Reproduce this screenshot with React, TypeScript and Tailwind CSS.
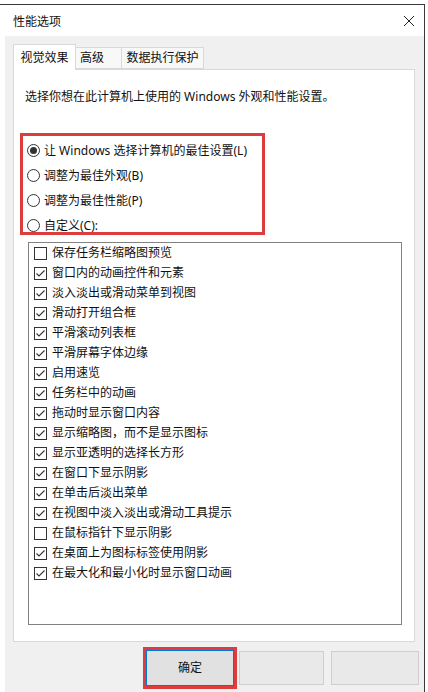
const font = { fontFamily: '"Noto Sans", "Noto Sans CJK SC", sans-serif' };

const options = [
  { label: '保存任务栏缩略图预览', checked: false },
  { label: '窗口内的动画控件和元素', checked: true },
  { label: '淡入淡出或滑动菜单到视图', checked: true },
  { label: '滑动打开组合框', checked: true },
  { label: '平滑滚动列表框', checked: true },
  { label: '平滑屏幕字体边缘', checked: true },
  { label: '启用速览', checked: true },
  { label: '任务栏中的动画', checked: true },
  { label: '拖动时显示窗口内容', checked: true },
  { label: '显示缩略图，而不是显示图标', checked: true },
  { label: '显示亚透明的选择长方形', checked: true },
  { label: '在窗口下显示阴影', checked: true },
  { label: '在单击后淡出菜单', checked: true },
  { label: '在视图中淡入淡出或滑动工具提示', checked: true },
  { label: '在鼠标指针下显示阴影', checked: false },
  { label: '在桌面上为图标标签使用阴影', checked: true },
  { label: '在最大化和最小化时显示窗口动画', checked: true },
];

const radios = [
  { label: '让 Windows 选择计算机的最佳设置(L)', selected: true },
  { label: '调整为最佳外观(B)', selected: false },
  { label: '调整为最佳性能(P)', selected: false },
  { label: '自定义(C):', selected: false },
];

function Radio({ selected }: { selected: boolean }) {
  return (
    <span className="w-[13px] h-[13px] rounded-full border border-[#333] bg-white flex items-center justify-center shrink-0">
      {selected && <span className="w-[7px] h-[7px] rounded-full bg-[#333]" />}
    </span>
  );
}

function Checkbox({ checked }: { checked: boolean }) {
  return (
    <span className="w-[13px] h-[13px] border border-[#333] bg-white flex items-center justify-center shrink-0">
      {checked && (
        <svg width="11" height="11" viewBox="0 0 11 11">
          <polyline points="1.5,5.5 4,8 9.5,2.5" fill="none" stroke="#333" strokeWidth="1.1" />
        </svg>
      )}
    </span>
  );
}

export default function App() {
  return (
    <div className="w-[428px] h-[692px] bg-white pt-[4px] overflow-hidden text-[12px] text-[#111]" style={font}>
      <div className="w-[425px] h-[688px] border-t border-r border-[#3a3a3a] flex flex-col">
        {/* title bar */}
        <div className="h-[31px] flex items-center justify-between pl-[13px] pr-[9px] pt-[2px]">
          <span className="leading-[16px]">性能选项</span>
          <svg width="12" height="12" viewBox="0 0 12 12" className="mb-[2px]">
            <path d="M1 1 L11 11 M11 1 L1 11" stroke="#222" strokeWidth="1" />
          </svg>
        </div>

        {/* body */}
        <div className="flex-1 bg-[#f0f0f0] ml-[5px] pl-[8px] pt-[8px]">
          {/* tabs */}
          <div className="flex items-end h-[25px] relative z-10">
            <div className="h-[26px] -mb-px w-[63px] bg-white border border-b-0 border-[#d9d9d9] flex items-center justify-center leading-[16px]">
              视觉效果
            </div>
            <div className="h-[22px] w-[46px] bg-[#f8f8f8] border border-l-0 border-[#d9d9d9] flex items-center pl-[4px] leading-[16px]">
              高级
            </div>
            <div className="h-[22px] w-[82px] bg-[#f8f8f8] border border-l-0 border-[#d9d9d9] flex items-center justify-center leading-[16px]">
              数据执行保护
            </div>
          </div>

          {/* panel */}
          <div className="relative w-[402px] h-[573px] bg-white border border-[#d9d9d9] pt-[19px]">
            <p className="pl-[11px] leading-[16px]">选择你想在此计算机上使用的 Windows 外观和性能设置。</p>

            <div className="mt-[33px] pl-[13px]">
              {radios.map((r) => (
                <div key={r.label} className="h-[25px] flex items-center gap-[4px] leading-[16px]">
                  <Radio selected={r.selected} />
                  <span>{r.label}</span>
                </div>
              ))}
            </div>

            <div className="absolute left-[6px] top-[63px] w-[245px] h-[102px] border-[3px] border-[#dc3c3c]" />

            <div className="mt-[4px] ml-[14px] w-[374px] h-[383px] border border-[#828282] pl-[5px]">
              {options.map((o) => (
                <div key={o.label} className="h-[20px] flex items-center gap-[5px] leading-[16px]">
                  <Checkbox checked={o.checked} />
                  <span>{o.label}</span>
                </div>
              ))}
            </div>
          </div>

          {/* buttons */}
          <div className="flex items-start mt-[5px]">
            <div className="ml-[130px] w-[94px] h-[42px] border-[3px] border-[#dc3c3c] flex">
              <div className="flex-1 bg-[#e1e1e1] border border-[#0078d7] flex items-center justify-center leading-[16px]">
                确定
              </div>
            </div>
            <div className="ml-[2px] mt-[4px] w-[85px] h-[34px] bg-[#e9e9e9] border border-[#cfcfcf]" />
            <div className="ml-[7px] mt-[4px] w-[88px] h-[34px] bg-[#e9e9e9] border border-[#cfcfcf]" />
          </div>
        </div>
      </div>
    </div>
  );
}
